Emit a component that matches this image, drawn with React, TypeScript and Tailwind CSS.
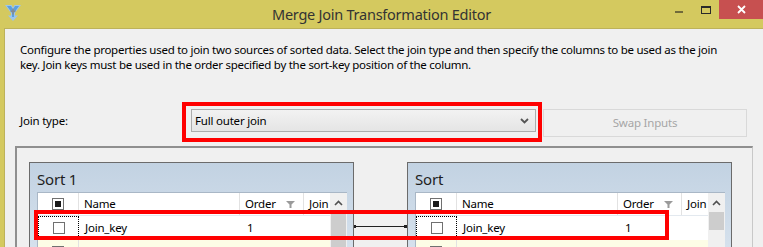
import React from 'react';

const font = { fontFamily: '"Noto Sans", "Open Sans", sans-serif' };

type Row = { name: string; order: string; focused?: boolean; bg: string };

const Checkbox: React.FC<{ mixed?: boolean }> = ({ mixed }) => (
  <div className="w-[12px] h-[12px] border border-[#707070] bg-white flex items-center justify-center">
    {mixed && <div className="w-[6px] h-[6px] bg-[#1a1a1a]" />}
  </div>
);

const FilterIcon = () => (
  <svg width="9" height="7" viewBox="0 0 9 7">
    <path d="M0 0 H9 L5.5 3.5 V7 H3.5 V3.5 Z" fill="#9a9a9a" />
  </svg>
);

const SortGrid: React.FC<{ title: string; rows: Row[]; thumbTall: boolean }> = ({ title, rows, thumbTall }) => (
  <div className="w-[325px] h-[120px] border border-[#6b6b6b] bg-gradient-to-b from-[#c2d2e2] to-[#dde7f1] flex flex-col">
    <div className="h-[29px] pl-[7px] pt-[6px] text-[15px] leading-[20px] tracking-[-0.2px] text-[#1e1e1e]">{title}</div>
    <div className="ml-[7px] w-[310px] flex-1 border-l border-t border-[#a9b7c6] bg-white flex">
      <div className="flex-1 flex flex-col">
        {/* header */}
        <div className="h-[23px] flex text-[11.5px] tracking-[-0.2px] text-black border-b border-[#e3e9ef]">
          <div className="w-[41px] flex items-center justify-center border-r border-[#e2e2e2]">
            <Checkbox mixed />
          </div>
          <div className="w-[161px] pl-[5px] flex items-center border-r border-[#e2e2e2]">Name</div>
          <div className="w-[64px] pl-[5px] flex items-center justify-between pr-[8px] border-r border-[#e2e2e2]">
            <span>Order</span>
            <FilterIcon />
          </div>
          <div className="flex-1 pl-[5px] flex items-center overflow-hidden whitespace-nowrap">Join</div>
        </div>
        {rows.map((r, i) => (
          <div key={i} className={`h-[24px] flex text-[11.5px] tracking-[-0.2px] text-black ${r.bg}`}>
            <div
              className={`w-[41px] flex items-center justify-center ${
                r.focused ? 'border border-dotted border-black' : 'border-r border-[#e2e2e2]'
              }`}
            >
              <Checkbox />
            </div>
            <div className="w-[161px] pl-[6px] flex items-center">{r.name}</div>
            <div className="w-[64px] pl-[7px] flex items-center">{r.order}</div>
            <div className="flex-1" />
          </div>
        ))}
      </div>
      {/* scrollbar */}
      <div className="w-[17px] flex flex-col bg-[#f0f0f0]">
        <div className="h-[19px] flex items-center justify-center">
          <svg width="9" height="6" viewBox="0 0 9 6">
            <path d="M1 5 L4.5 1.5 L8 5" stroke="#505050" strokeWidth="1.6" fill="none" />
          </svg>
        </div>
        <div className={`mx-[1px] bg-[#cdcdcd] ${thumbTall ? 'flex-1' : 'h-[18px]'}`} />
      </div>
    </div>
  </div>
);

export default function App() {
  const leftRows: Row[] = [
    { name: 'Join_key', order: '1', focused: true, bg: 'bg-white' },
    { name: 'Product_id', order: '0', bg: 'bg-[#fdfde6]' },
  ];
  const rightRows: Row[] = [
    { name: 'Join_key', order: '1', focused: true, bg: 'bg-white' },
    { name: 'Order_total', order: '0', bg: 'bg-[#fdfde6]' },
  ];

  return (
    <div className="relative w-[763px] h-[247px] overflow-hidden bg-[#d4c95f]" style={font}>
      {/* title bar */}
      <div className="h-[28px] grid grid-cols-[1fr_auto_1fr] items-start">
        <div className="pl-[5px] pt-[4px]">
          <svg width="16" height="17" viewBox="0 0 16 17">
            <path d="M0 1 H6.5 L8 3.5 L9.5 1 H16 L10 9 V11.5 H13 L8 17 L3 11.5 H6 V9 Z" fill="#9cc6ec" />
            <path d="M2 2 H6 L8 5.5 L10 2 H14 L9 9 V13 H7 V9 Z" fill="#5b9fdd" />
            <rect x="7.3" y="4.5" width="1.4" height="6" fill="#8a8a8a" />
            <rect x="5.5" y="6.5" width="5" height="1.4" fill="#8a8a8a" />
          </svg>
        </div>
        <div className="pt-[4px] text-[14.5px] leading-[20px] tracking-[-0.25px] text-[#333333] whitespace-nowrap">
          Merge Join Transformation Editor
        </div>
        <div className="flex justify-end items-start">
          <div className="w-[27px] h-[19px] flex items-center justify-center">
            <div className="w-[8px] h-[2px] mt-[5px] bg-[#706a3a]" />
          </div>
          <div className="w-[27px] h-[19px] flex items-center justify-center">
            <div className="w-[10px] h-[8px] border border-t-2 border-[#2a2a2a]" />
          </div>
          <div className="w-[44px] h-[19px] bg-[#c75050] flex items-center justify-center">
            <svg width="9" height="9" viewBox="0 0 9 9">
              <path d="M1 1 L8 8 M8 1 L1 8" stroke="#ffffff" strokeWidth="1.8" />
            </svg>
          </div>
        </div>
      </div>

      {/* window body */}
      <div className="pl-[4px] h-[219px]">
        <div className="h-full bg-[#f0f0f0] border-l border-t border-[#bdb25a] pl-[15px] pt-[13px]">
          <p className="text-[11.5px] leading-[15px] tracking-[-0.27px] text-black whitespace-nowrap">
            Configure the properties used to join two sources of sorted data. Select the join type and then specify the columns to be used as the join
            <br />
            key. Join keys must be used in the order specified by the sort-key position of the column.
          </p>

          <div className="mt-[37px] flex items-start">
            <div className="w-[171px] h-[23px] flex items-center text-[11.5px] tracking-[-0.2px] text-black">Join type:</div>
            <div className="w-[345px] h-[23px] border border-[#acacac] bg-gradient-to-b from-[#f2f2f2] to-[#e5e5e5] flex items-center justify-between pl-[3px] pr-[6px] text-[11.5px] tracking-[-0.2px] text-black">
              <span>Full outer join</span>
              <svg width="9" height="6" viewBox="0 0 9 6">
                <path d="M1 1 L4.5 4.5 L8 1" stroke="#555555" strokeWidth="1.8" fill="none" />
              </svg>
            </div>
            <div className="ml-[7px] w-[204px] h-[28px] border border-[#d9d9d9] bg-[#f0f0f0] flex items-center justify-center text-[11.5px] tracking-[-0.2px] text-[#a6a6a6]">
              Swap Inputs
            </div>
          </div>

          <div className="mt-[9px] -ml-[5px] w-[738px] h-[120px] border-l-2 border-t-2 border-[#8f8f8f] border-r border-r-[#c8c8c8] bg-[#f0f0f0] pl-[12px] pt-[14px] flex items-start">
            <SortGrid title="Sort 1" rows={leftRows} thumbTall />
            <div className="w-[53px] h-[120px] flex flex-col">
              <div className="h-[63px]" />
              <svg width="53" height="3" viewBox="0 0 53 3">
                <rect x="0" y="0" width="2" height="3" fill="#202020" />
                <rect x="0" y="1" width="53" height="1" fill="#202020" />
                <rect x="50" y="0" width="3" height="3" fill="#202020" />
              </svg>
            </div>
            <SortGrid title="Sort" rows={rightRows} thumbTall={false} />
          </div>
        </div>
      </div>

      {/* red annotation boxes */}
      <div className="absolute left-[182px] top-[102px] w-[360px] h-[40px] border-4 border-[#ff0000]" />
      <div className="absolute left-[34px] top-[210px] w-[635px] h-[30px] border-4 border-[#ff0000]" />
    </div>
  );
}
